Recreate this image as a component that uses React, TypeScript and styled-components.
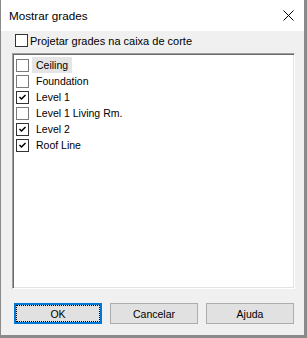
import React from "react";
import styled, { createGlobalStyle } from "styled-components";

const Global = createGlobalStyle`
  html, body { margin: 0; padding: 0; background: #ffffff; }
  * { box-sizing: border-box; }
`;

const Window = styled.div`
  width: 307px;
  height: 338px;
  display: flex;
  flex-direction: column;
  border-left: 1px solid #8a8a8a;
  border-right: 3px solid #8a8a8a;
  border-bottom: 3px solid #8a8a8a;
  background: #f0f0f0;
  font-family: "Liberation Sans", Arial, sans-serif;
  color: #000;
`;

const TitleBar = styled.div`
  height: 31px;
  flex: none;
  background: #ffffff;
  display: flex;
  align-items: center;
  justify-content: space-between;
  padding: 0 10px 0 8px;
`;

const Title = styled.span`
  font-family: "Segoe UI", "Liberation Sans", sans-serif;
  font-size: 11.7px;
  color: #000;
  padding-bottom: 1px;
`;

const Body = styled.div`
  flex: 1;
  display: flex;
  flex-direction: column;
  padding: 3px 9px 0 11px;
`;

const TopRow = styled.label`
  display: flex;
  align-items: center;
  height: 13px;
  margin-left: 3px;
  gap: 2px;
  font-size: 11px;
`;

const Box = styled.span<{ $dark?: boolean }>`
  width: 13px;
  height: 13px;
  flex: none;
  background: #fff;
  border: 1px solid ${(p) => (p.$dark ? "#333333" : "#7a7a7a")};
  display: flex;
  align-items: center;
  justify-content: center;
`;

const ListBox = styled.div`
  margin-top: 6px;
  height: 236px;
  background: #fff;
  border-top: 1px solid #a0a0a0;
  border-left: 1px solid #a0a0a0;
  border-right: 1px solid #ffffff;
  border-bottom: 1px solid #ffffff;
  box-shadow: inset 1px 1px 0 #696969, inset -1px -1px 0 #e3e3e3;
  padding: 3px 2px 0 3px;
  display: flex;
  flex-direction: column;
`;

const Item = styled.div`
  height: 16px;
  display: flex;
  align-items: center;
  gap: 3px;
`;

const ItemText = styled.span<{ $sel?: boolean }>`
  font-size: 10.5px;
  line-height: 16px;
  height: 16px;
  padding: 0 4px 0 4px;
  background: ${(p) => (p.$sel ? "#e5e5e5" : "transparent")};
`;

const Buttons = styled.div`
  display: flex;
  justify-content: space-between;
  margin-top: 14px;
  padding: 0 1px 0 2px;
`;

const Button = styled.button<{ $default?: boolean }>`
  width: 88px;
  height: 21px;
  font-family: "Liberation Sans", Arial, sans-serif;
  font-size: 10.5px;
  color: #000;
  background: #e1e1e1;
  border: ${(p) => (p.$default ? "2px solid #0078d7" : "1px solid #adadad")};
  padding: 0;
  display: flex;
  align-items: center;
  justify-content: center;
  position: relative;
`;

const Focus = styled.span`
  position: absolute;
  inset: 0;
  border: 1px dotted #000;
`;

const Check = () => (
  <svg width="9" height="9" viewBox="0 0 9 9">
    <path d="M1.5 4 L3.5 6 L7.5 2" fill="none" stroke="#000" strokeWidth="1.5" />
  </svg>
);

const Close = () => (
  <svg width="11" height="11" viewBox="0 0 11 11">
    <path d="M0.5 0.5 L10.5 10.5 M10.5 0.5 L0.5 10.5" stroke="#000" strokeWidth="1" />
  </svg>
);

const items = [
  { name: "Ceiling", checked: false },
  { name: "Foundation", checked: false },
  { name: "Level 1", checked: true },
  { name: "Level 1 Living Rm.", checked: false },
  { name: "Level 2", checked: true },
  { name: "Roof Line", checked: true },
];

export default function App() {
  return (
    <>
      <Global />
      <Window>
        <TitleBar>
          <Title>Mostrar grades</Title>
          <Close />
        </TitleBar>
        <Body>
          <TopRow>
            <Box $dark />
            <span>Projetar grades na caixa de corte</span>
          </TopRow>
          <ListBox>
            {items.map((it, i) => (
              <Item key={it.name}>
                <Box $dark={it.checked}>{it.checked && <Check />}</Box>
                <ItemText $sel={i === 0}>{it.name}</ItemText>
              </Item>
            ))}
          </ListBox>
          <Buttons>
            <Button $default>
              <Focus />
              OK
            </Button>
            <Button>Cancelar</Button>
            <Button>Ajuda</Button>
          </Buttons>
        </Body>
      </Window>
    </>
  );
}
